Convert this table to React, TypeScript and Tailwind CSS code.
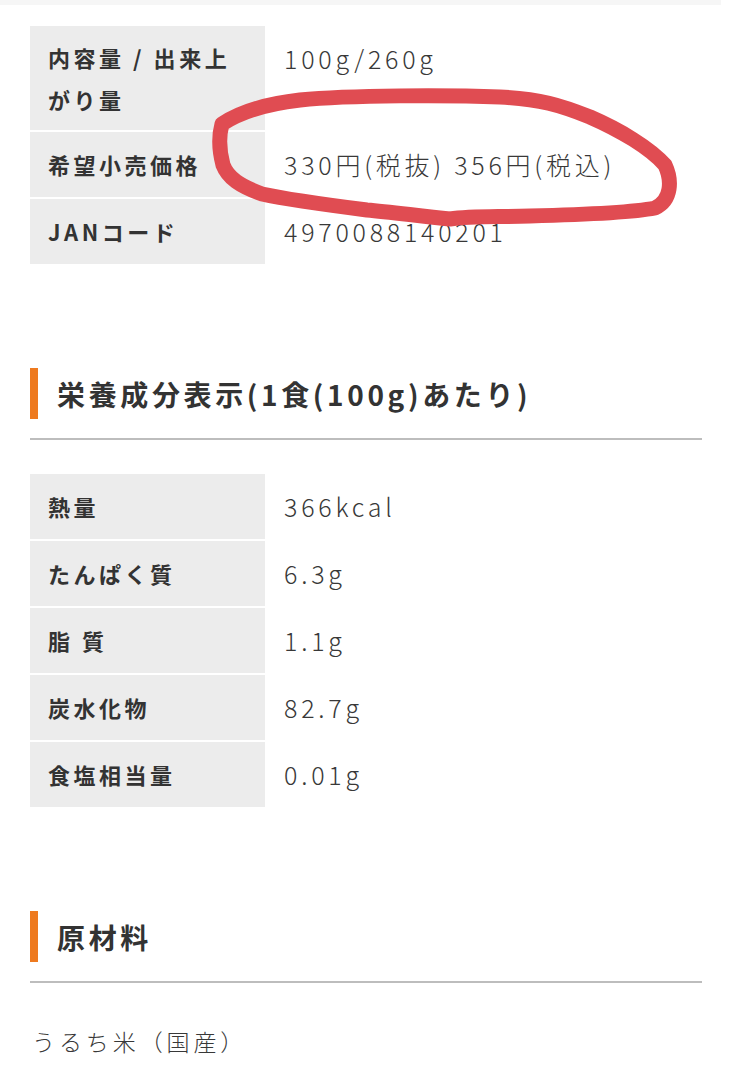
import React from "react";

const font = { fontFamily: '"Noto Sans CJK JP", "Noto Sans", sans-serif' };

function Row({ label, value, tall }: { label: React.ReactNode; value: string; tall?: boolean }) {
  return (
    <div className="grid grid-cols-[235px_1fr]">
      <div
        className={
          tall
            ? "bg-[#ececec] px-[18px] pt-[10px] h-[104px] text-[22px] leading-[42px] font-bold text-[#333] tracking-[0.16em]"
            : "bg-[#ececec] px-[18px] h-[65px] flex items-center text-[22px] font-bold text-[#333] tracking-[0.16em]"
        }
      >
        {tall ? <div>{label}</div> : label}
      </div>
      <div
        className={
          tall
            ? "pl-[19px] pt-[11px] text-[25px] leading-[42px] text-[#383838] tracking-[0.15em] font-light"
            : "pl-[19px] h-[65px] flex items-center pt-[1px] text-[25px] text-[#383838] tracking-[0.15em] font-light"
        }
      >
        {value}
      </div>
    </div>
  );
}

function Heading({ children }: { children: React.ReactNode }) {
  return (
    <div>
      <div className="flex items-center h-[51px] border-l-[8px] border-[#ee7a1f] pl-[19px] text-[28px] font-bold text-[#333] tracking-[0.13em]">
        {children}
      </div>
      <div className="mt-[19px] h-[2px] bg-[#bdbdbd]" />
    </div>
  );
}

export default function App() {
  return (
    <div className="relative w-[733px] h-[1080px] bg-white overflow-hidden" style={font}>
      <div className="h-[5px] bg-[#f6f6f6] mr-[12px]" />
      <div className="pl-[30px] pr-[31px] pt-[21px]">
        <div className="flex flex-col gap-[2px]">
          <Row tall label={<>内容量 / 出来上<br />がり量</>} value="100g/260g" />
          <Row label="希望小売価格" value="330円(税抜) 356円(税込)" />
          <Row label="JANコード" value="4970088140201" />
        </div>

        <div className="mt-[104px]">
          <Heading>栄養成分表示(1食(100g)あたり)</Heading>
        </div>

        <div className="mt-[34px] flex flex-col gap-[2px]">
          <Row label="熱量" value="366kcal" />
          <Row label="たんぱく質" value="6.3g" />
          <Row label="脂 質" value="1.1g" />
          <Row label="炭水化物" value="82.7g" />
          <Row label="食塩相当量" value="0.01g" />
        </div>

        <div className="mt-[104px]">
          <Heading>原材料</Heading>
        </div>

        <div className="mt-[42px] pl-[2px] text-[23px] leading-[32px] text-[#383838] tracking-[0.17em] font-light">
          うるち米（国産）
        </div>
      </div>

      <svg
        className="absolute inset-0 pointer-events-none"
        width="733"
        height="1080"
        viewBox="0 0 733 1080"
      >
        <path
          d="M 222 124 C 240 112, 265 104, 300 100 C 350 95, 450 95, 500 97 C 540 99, 560 105, 590 117 C 620 130, 650 148, 665 165 C 672 180, 672 200, 655 208 C 630 213, 570 215, 530 216 C 490 217, 470 216, 450 219 C 420 216, 390 212, 367 210 C 320 204, 285 199, 262 194 C 240 186, 228 178, 223 165 C 219 150, 219 135, 222 124 Z"
          fill="none"
          stroke="#e04c52"
          strokeWidth="15"
          strokeLinecap="round"
          strokeLinejoin="round"
        />
      </svg>
    </div>
  );
}
